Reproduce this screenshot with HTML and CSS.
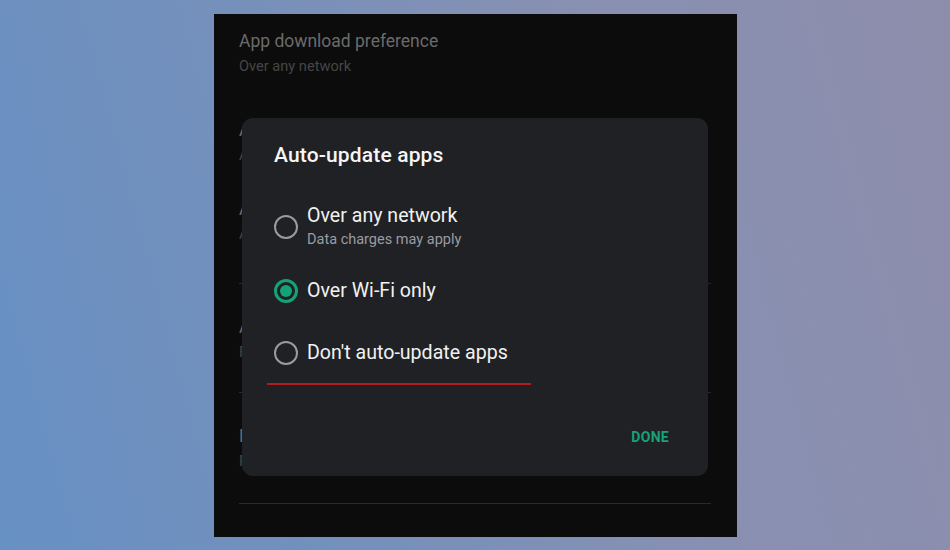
FILE: index.html
```html
<!DOCTYPE html>
<html lang="en">
<head>
<meta charset="utf-8">
<title>Auto-update apps</title>
<link rel="stylesheet" href="styles.css">
</head>
<body>
<div class="phone">
  <div class="list">
    <div class="item first">
      <div class="item-title">App download preference</div>
      <div class="item-sub">Over any network</div>
    </div>
    <div class="item second">
      <div class="item-title">Auto-update</div>
      <div class="item-sub">Any</div>
    </div>
    <div class="item third">
      <div class="item-title">Auto-play</div>
      <div class="item-sub">Auto</div>
    </div>
    <div class="divider d1"></div>
    <div class="item fourth">
      <div class="item-title">Appearance</div>
      <div class="item-sub">Follow</div>
    </div>
    <div class="divider d2"></div>
    <div class="item fifth">
      <div class="item-title">Biometric</div>
      <div class="item-sub">Protect</div>
    </div>
    <div class="divider d3"></div>
  </div>

  <div class="dialog">
    <div class="dialog-title">Auto-update apps</div>
    <div class="option opt1">
      <span class="radio"></span>
      <div class="option-text">
        <div class="option-label">Over any network</div>
        <div class="option-sub">Data charges may apply</div>
      </div>
    </div>
    <div class="option opt2">
      <span class="radio checked"></span>
      <div class="option-text">
        <div class="option-label">Over Wi-Fi only</div>
      </div>
    </div>
    <div class="option opt3">
      <span class="radio"></span>
      <div class="option-text">
        <div class="option-label">Don't auto-update apps</div>
      </div>
    </div>
    <div class="red-line"></div>
    <div class="actions">
      <span class="done">DONE</span>
    </div>
  </div>
</div>
</body>
</html>
```

FILE: styles.css
```css
html, body {
  margin: 0;
  padding: 0;
}
body {
  width: 950px;
  height: 550px;
  overflow: hidden;
  background: linear-gradient(75deg, #6790c4 0%, #7690bb 35%, #8890b2 65%, #8d8dab 100%);
  font-family: Roboto, "Noto Sans", sans-serif;
}
.phone {
  position: relative;
  margin: 14px 0 0 214px;
  width: 523px;
  height: 523px;
  background: #0c0c0c;
  overflow: hidden;
}
.list {
  padding: 16px 26px 0 25px;
}
.item {
  display: flex;
  flex-direction: column;
  gap: 4px;
}
.item-title {
  font-size: 17.5px;
  line-height: 22px;
  color: #6b6b6b;
  white-space: nowrap;
}
.item-sub {
  font-size: 14.6px;
  line-height: 20px;
  color: #464646;
  white-space: nowrap;
}
.second { margin-top: 43px; }
.third { margin-top: 33px; }
.divider {
  height: 1px;
  background: #2a2a2a;
}
.d1 { margin-top: 39px; }
.fourth { margin-top: 32px; }
.d2 { margin-top: 30px; }
.fifth { margin-top: 32px; }
.d3 { margin-top: 32px; }

.dialog {
  position: absolute;
  left: 28px;
  top: 104px;
  width: 466px;
  height: 358px;
  box-sizing: border-box;
  padding: 23px 32px 0 32px;
  background: #202125;
  border-radius: 11px;
  display: flex;
  flex-direction: column;
}
.dialog-title {
  font-size: 21px;
  line-height: 28px;
  font-weight: 500;
  color: #f5f5f5;
  letter-spacing: 0.15px;
}
.option {
  display: flex;
  align-items: center;
  gap: 9px;
}
.opt1 { margin-top: 35px; }
.opt2 { margin-top: 29px; }
.opt3 { margin-top: 38px; }
.radio {
  width: 24px;
  height: 24px;
  box-sizing: border-box;
  border: 2px solid #9b9b9b;
  border-radius: 50%;
  flex: none;
  display: flex;
  align-items: center;
  justify-content: center;
}
.radio.checked {
  border: 3px solid #14a374;
}
.radio.checked::after {
  content: "";
  width: 12px;
  height: 12px;
  border-radius: 50%;
  background: #14a374;
}
.option-text {
  display: flex;
  flex-direction: column;
  gap: 2px;
}
.option-label {
  font-size: 19.6px;
  line-height: 24px;
  color: #f1f1f1;
  white-space: nowrap;
}
.option-sub {
  font-size: 14.5px;
  line-height: 20px;
  color: #9a9ca0;
  white-space: nowrap;
}
.red-line {
  margin-top: 18px;
  margin-left: -7px;
  width: 264px;
  height: 2px;
  background: #b4191d;
}
.actions {
  margin-top: 42px;
  display: flex;
  justify-content: flex-end;
  padding-right: 7px;
}
.done {
  font-size: 14px;
  line-height: 20px;
  font-weight: 700;
  color: #17a277;
  letter-spacing: 0.3px;
}
```
